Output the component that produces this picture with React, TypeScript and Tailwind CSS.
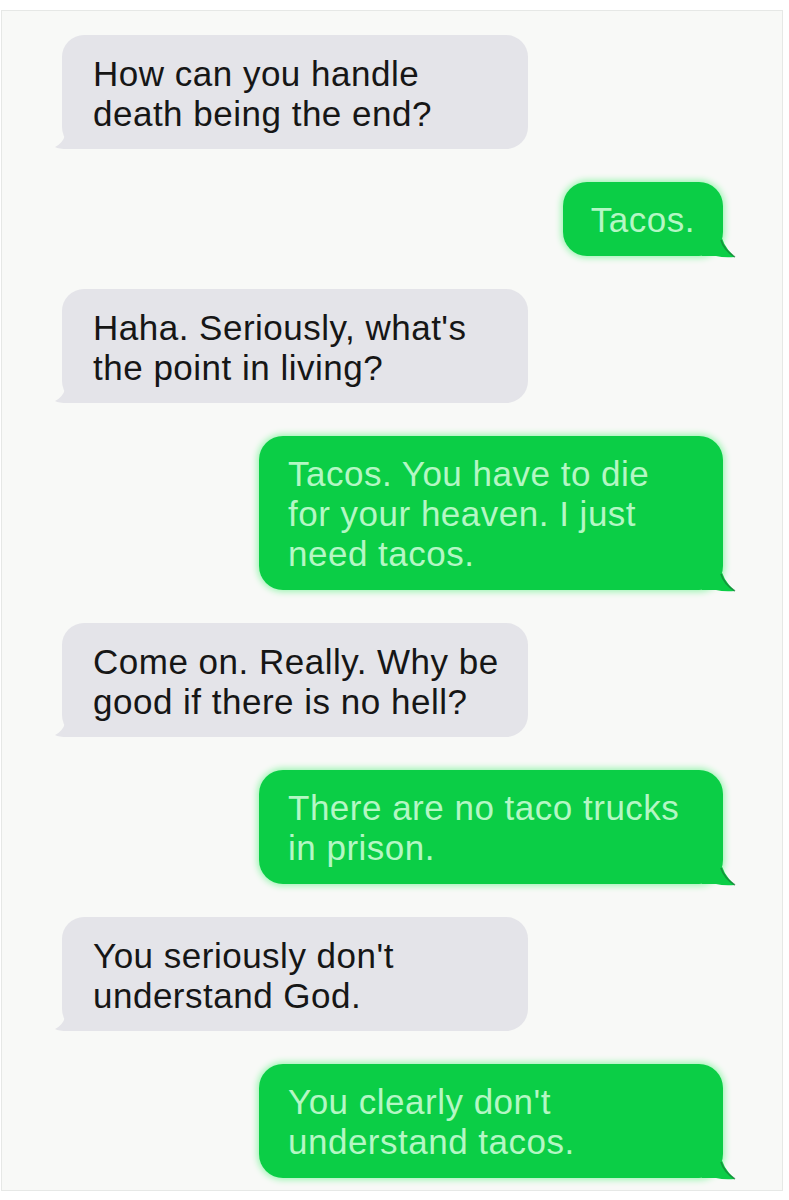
const messages: { from: "them" | "me"; lines: string[] }[] = [
  { from: "them", lines: ["How can you handle", "death being the end?"] },
  { from: "me", lines: ["Tacos."] },
  { from: "them", lines: ["Haha. Seriously, what's", "the point in living?"] },
  { from: "me", lines: ["Tacos. You have to die", "for your heaven. I just", "need tacos."] },
  { from: "them", lines: ["Come on. Really. Why be", "good if there is no hell?"] },
  { from: "me", lines: ["There are no taco trucks", "in prison."] },
  { from: "them", lines: ["You seriously don't", "understand God."] },
  { from: "me", lines: ["You clearly don't", "understand tacos."] },
];

function GrayTail() {
  return (
    <svg
      className="absolute -left-[7px] bottom-0"
      width="30"
      height="26"
      viewBox="0 0 30 26"
    >
      <path d="M14 0 L30 0 L30 26 L12 26 Q4 26 0 24 Q8 20 10 12 Z" fill="#e4e4e9" />
    </svg>
  );
}

function GreenTail() {
  return (
    <svg
      className="absolute -right-[13px] -bottom-[2px]"
      width="34"
      height="28"
      viewBox="0 0 34 28"
    >
      <path d="M0 0 L18 0 Q20 16 33 27 Q22 28 14 26 L0 26 Z" fill="#0bce46" />
      <path d="M19 10 Q22 20 33 27" stroke="#1d6b35" strokeWidth="1.5" fill="none" opacity="0.6" />
    </svg>
  );
}

function Bubble({ from, lines }: { from: "them" | "me"; lines: string[] }) {
  if (from === "them") {
    return (
      <div className="relative w-[466px] rounded-[22px] bg-[#e4e4e9] pt-[19px] pb-[15px] pl-[31px] text-[#161616]">
        <GrayTail />
        <div className="relative">
          {lines.map((line) => (
            <p key={line} className="leading-[40px]">
              {line}
            </p>
          ))}
        </div>
      </div>
    );
  }
  const short = lines.length === 1;
  return (
    <div
      className={`relative self-end rounded-[24px] bg-[#0bce46] pt-[18px] pb-[16px] text-[#b4f7c4] shadow-[0_0_6px_2px_#9ff5b4] ${
        short ? "px-[28px]" : "w-[464px] pl-[29px]"
      }`}
    >
      <GreenTail />
      <div className="relative">
        {lines.map((line) => (
          <p key={line} className="leading-[40px]">
            {line}
          </p>
        ))}
      </div>
    </div>
  );
}

export default function App() {
  return (
    <div className="h-[1200px] w-[789px] bg-white pt-[10px]">
      <div className="ml-[1px] flex h-[1181px] w-[782px] flex-col gap-[33px] border border-[#e6e8e6] bg-[#f8f9f7] pl-[60px] pr-[59px] pt-[24px] font-['Liberation_Sans',Arial,sans-serif] text-[35px] tracking-[0.5px]">
        {messages.map((m, i) => (
          <Bubble key={i} from={m.from} lines={m.lines} />
        ))}
      </div>
    </div>
  );
}
